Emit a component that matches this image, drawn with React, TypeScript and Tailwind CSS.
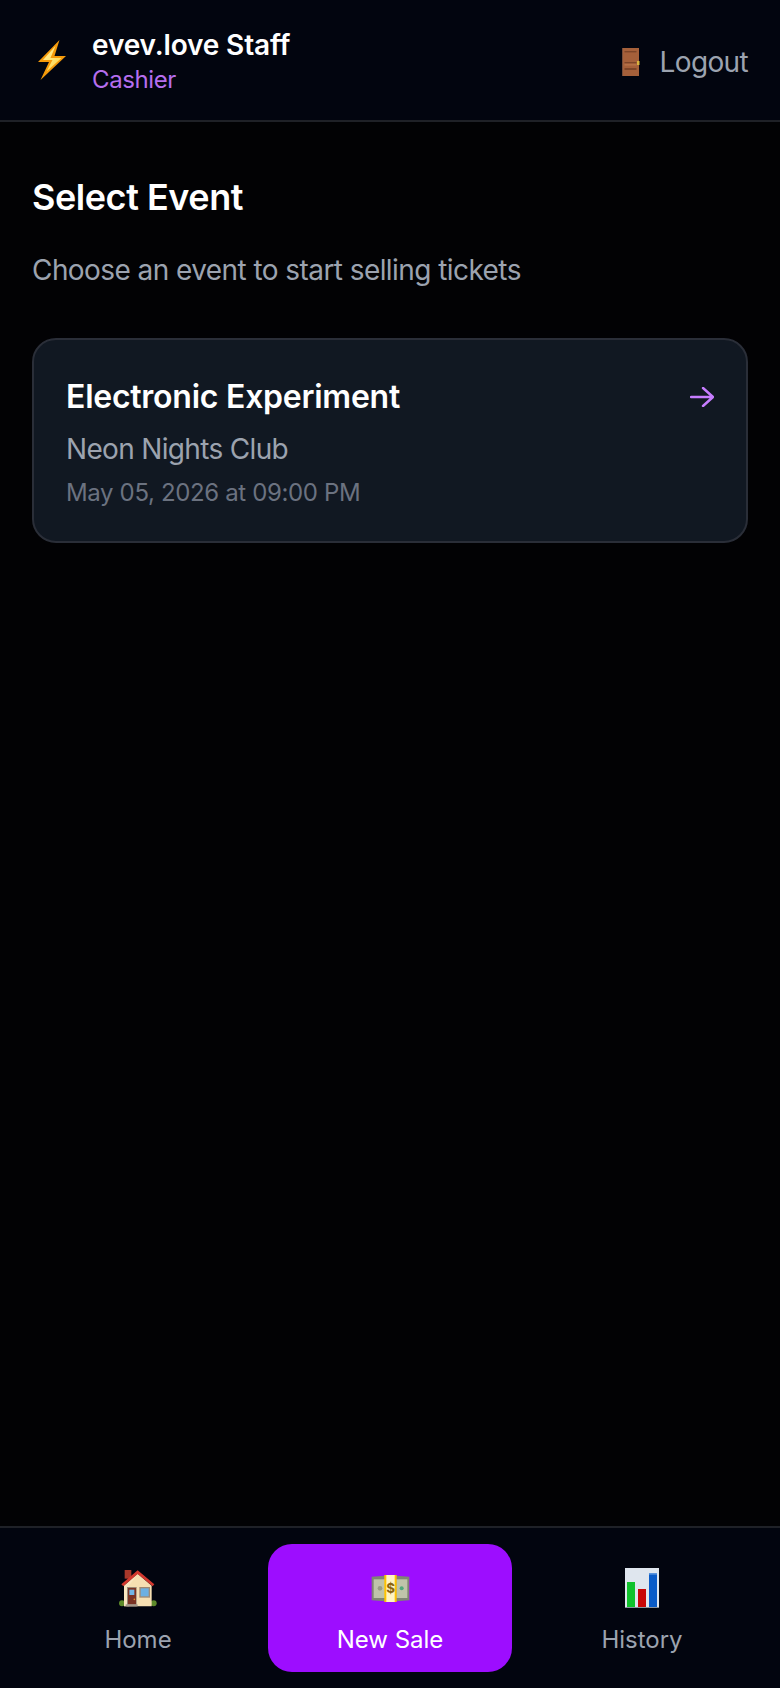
import React from "react";

function Bolt() {
  return (
    <svg width="28" height="40" viewBox="0 0 28 40" className="block">
      <defs>
        <linearGradient id="boltFill" x1="0" y1="0" x2="1" y2="1">
          <stop offset="0" stopColor="#fff3a8" />
          <stop offset="1" stopColor="#ffd23a" />
        </linearGradient>
      </defs>
      <polygon points="21.5,0 0,22 11,22 2.5,40 28,16 16.5,16" fill="#f59a0a" />
      <polygon points="17.5,6 5,20 14.5,20 8.5,31.5 23.5,18 12.5,18" fill="url(#boltFill)" />
    </svg>
  );
}

function Door() {
  return (
    <svg width="18" height="28" viewBox="0 0 18 28" className="block">
      <rect x="0" y="0" width="17" height="28" fill="#a5603a" />
      <rect x="0" y="0" width="0.8" height="28" fill="#6d4a3a" />
      <rect x="2.5" y="3" width="12" height="1.4" fill="#7d4528" />
      <rect x="2.5" y="14" width="12" height="1.2" fill="#7d4528" />
      <rect x="2.5" y="16.5" width="12" height="0.8" fill="#c48055" />
      <rect x="2.5" y="20" width="12" height="2" fill="#7d4528" />
      <rect x="15" y="13" width="2.5" height="4" fill="#d9b23c" />
    </svg>
  );
}

function House() {
  return (
    <svg width="38" height="38" viewBox="0 0 114 114" className="block">
      <circle cx="9" cy="103" r="9" fill="#5d8a2a" />
      <circle cx="104" cy="103" r="9" fill="#5d8a2a" />
      <rect x="17" y="3" width="20" height="26" fill="#a8382a" />
      <polygon points="56,14 98,50 98,112 15,112 15,50" fill="#f6dfb2" />
      <polygon points="56,14 15,50 15,112 30,112 30,50" fill="#fbeccb" opacity="0.6" />
      <polygon points="56,4 106,46 101,52 56,15 13,52 7,46" fill="#d2382e" />
      <rect x="24" y="54" width="29" height="58" fill="#9a8a78" />
      <rect x="27" y="57" width="24" height="49" fill="#7a3324" />
      <rect x="31" y="62" width="15" height="16" fill="#72b6e6" />
      <circle cx="46" cy="91" r="2.5" fill="#e09a2a" />
      <rect x="20" y="106" width="36" height="6" fill="#a89a8c" />
      <rect x="61" y="54" width="32" height="32" fill="#a08a72" />
      <rect x="65" y="58" width="24" height="24" fill="#6cb0e2" />
    </svg>
  );
}

function Money() {
  return (
    <svg width="39" height="27" viewBox="0 0 117 81" className="block">
      <polygon points="2,5 42,2 42,79 2,76" fill="#7f8574" />
      <polygon points="115,5 76,2 76,79 115,76" fill="#7f8574" />
      <rect x="8" y="13" width="34" height="56" fill="#bfc3aa" />
      <rect x="76" y="13" width="33" height="56" fill="#bfc3aa" />
      <circle cx="27" cy="40" r="7" fill="#989c86" />
      <circle cx="92" cy="40" r="6" fill="#4fa87c" />
      <rect x="40" y="0" width="37" height="81" fill="#ffc400" />
      <rect x="46" y="0" width="25" height="81" fill="#fff4c4" />
      <text x="58.5" y="55" textAnchor="middle" fontFamily="Inter, sans-serif" fontWeight="700" fontSize="40" fill="#8a6410">$</text>
    </svg>
  );
}

function Chart() {
  return (
    <svg width="34" height="40" viewBox="0 0 102 120" className="block">
      <rect width="102" height="120" fill="#dfe6ee" />
      <rect x="6" y="42" width="24" height="78" fill="#10c22c" />
      <rect x="39" y="63" width="24" height="57" fill="#c80606" />
      <rect x="72" y="15" width="24" height="105" fill="#0a5cc8" />
      <rect x="72" y="15" width="24" height="5" fill="#5a94dc" />
      <rect y="117" width="102" height="3" fill="#8a949e" />
    </svg>
  );
}

function NavItem({ icon, label, active }: { icon: React.ReactNode; label: string; active?: boolean }) {
  return (
    <button
      className={
        active
          ? "flex flex-col items-center gap-2 rounded-3xl bg-[#9d0dff] py-4 text-white"
          : "flex flex-col items-center gap-2 rounded-3xl py-4 text-[#9ca3af]"
      }
    >
      <span className="flex h-14 items-center justify-center">{icon}</span>
      <span className="text-2xl leading-8">{label}</span>
    </button>
  );
}

export default function App() {
  return (
    <div className="flex h-[1688px] flex-col bg-[#020204] font-['Inter',sans-serif]">
      <header className="flex items-center justify-between border-b-2 border-[#1f2127] bg-[#02050f] px-8 py-6">
        <div className="flex items-center gap-5">
          <span className="flex w-10 justify-center"><Bolt /></span>
          <div>
            <div className="text-[28px] leading-[42px] font-semibold tracking-[-0.15px] text-white">evev.love Staff</div>
            <div className="mb-[2px] text-2xl leading-7 tracking-[-0.4px] text-[#b56eee]">Cashier</div>
          </div>
        </div>
        <button className="flex items-center gap-5 pt-1 text-[28px] leading-10 tracking-[-0.65px] text-[#9ca3af]">
          <Door />
          <span>Logout</span>
        </button>
      </header>

      <main className="flex-1 px-8 pt-[53px]">
        <h1 className="text-4xl leading-[44px] font-semibold tracking-[-0.45px] text-white">Select Event</h1>
        <p className="mt-[31px] text-[28px] leading-10 tracking-[-0.57px] text-[#9ca3af]">Choose an event to start selling tickets</p>
        <div className="mt-12 flex items-start justify-between rounded-3xl border-2 border-[#2a2e38] bg-[#111822] px-8 pt-[33px] pb-8">
          <div>
            <div className="text-[32px] leading-[48px] font-semibold tracking-[-0.25px] text-white">Electronic Experiment</div>
            <div className="mt-2 text-[28px] leading-10 tracking-[-0.67px] text-[#9ca3af]">Neon Nights Club</div>
            <div className="mt-2 text-2xl leading-8 tracking-[-0.36px] text-[#6b7280]">May 05, 2026 at 09:00 PM</div>
          </div>
          <svg width="24" height="20" viewBox="0 0 24 20" fill="none" stroke="#c77dff" strokeWidth="2.4" strokeLinecap="round" strokeLinejoin="round" className="mt-[14px]">
            <path d="M1 10h22M13 1l10 9-10 9" />
          </svg>
        </div>
      </main>

      <nav className="grid grid-cols-3 gap-2 border-t-2 border-[#1f2127] bg-[#02050f] p-4">
        <NavItem icon={<House />} label="Home" />
        <NavItem icon={<Money />} label="New Sale" active />
        <NavItem icon={<Chart />} label="History" />
      </nav>
    </div>
  );
}
